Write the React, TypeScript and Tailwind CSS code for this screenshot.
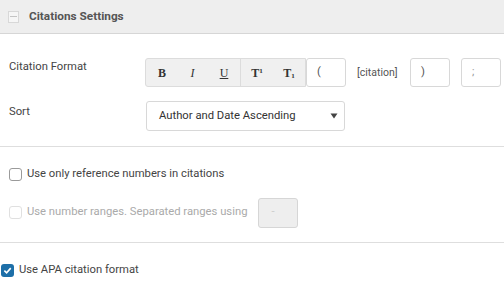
import React, { useState } from 'react';

const Checkbox = ({ checked, disabled }: { checked?: boolean; disabled?: boolean }) => (
  <span
    className={
      checked
        ? 'flex h-[13px] w-[13px] items-center justify-center rounded-[3px] bg-[#1d6fa8]'
        : disabled
        ? 'h-[13px] w-[13px] rounded-[3px] border border-[#e0e0e0] bg-white'
        : 'h-[13px] w-[13px] rounded-[3px] border border-[#9a9a9a] bg-white'
    }
  >
    {checked && (
      <svg width="9" height="9" viewBox="0 0 10 10">
        <path d="M1.5 5.2 L4 7.6 L8.6 2.4" fill="none" stroke="white" strokeWidth="1.8" />
      </svg>
    )}
  </span>
);

const App = () => {
  const [sort] = useState('Author and Date Ascending');

  return (
    <div className="h-[283px] w-[504px] overflow-hidden bg-white font-['Roboto',sans-serif] text-[11.25px] text-[#444]">
      {/* header */}
      <div className="flex h-[34px] items-center border-b border-[#d6d6d6] bg-[#eeeeee] pl-[8px]">
        <span className="flex h-[12px] w-[11px] items-center justify-center border border-[#d8d8d8] bg-[#f6f6f6]">
          <span className="h-px w-[7px] bg-[#c4c4c4]" />
        </span>
        <span className="ml-[10px] text-[11.8px] font-bold text-[#555]">Citations Settings</span>
      </div>

      {/* format + sort */}
      <div className="border-b border-[#dedede] pb-[15px] pt-[24px]">
        <div className="flex items-center">
          <span className="w-[145px] self-start pl-[9px] pt-[1px] text-[#444]">Citation Format</span>
          <div className="flex h-[29px] items-center rounded-l-[3px] border border-[#dcdcdc] bg-[#f0f0f0] font-['Liberation_Serif',serif] text-[12px] text-[#333]">
            <span className="w-[31px] pl-px text-center font-bold">B</span>
            <span className="w-[31px] text-center italic">I</span>
            <span className="w-[32px] text-center underline">U</span>
            <span className="h-full w-px bg-[#dcdcdc]" />
            <span className="w-[32px] text-center font-bold">
              T<sup className="text-[7px]">1</sup>
            </span>
            <span className="w-[32px] text-center font-bold">
              T<sub className="text-[7px]">1</sub>
            </span>
          </div>
          <div className="flex h-[29px] w-[40px] items-center rounded-[3px] border border-[#d8d8d8] bg-white pl-[10px] text-[#555]">(</div>
          <span className="ml-[11px] w-[53px] text-[10.5px] text-[#555]">[citation]</span>
          <div className="flex h-[29px] w-[40px] items-center rounded-[3px] border border-[#d8d8d8] bg-white pl-[10px] text-[#555]">)</div>
          <div className="ml-[11px] flex h-[29px] w-[40px] items-center rounded-[3px] border border-[#d8d8d8] bg-white pl-[10px] text-[#999]">;</div>
        </div>
        <div className="mt-[14px] flex items-center">
          <span className="w-[146px] self-start pl-[9px] pt-[3px] text-[#444]">Sort</span>
          <div className="flex h-[30px] w-[199px] items-center justify-between rounded-[3px] border border-[#d8d8d8] bg-white pl-[12px] pr-[6px] text-[#333]">
            <span>{sort}</span>
            <svg width="8" height="6" viewBox="0 0 8 6">
              <path d="M0.5 0.5 L7.5 0.5 L4 5.5 Z" fill="#444" />
            </svg>
          </div>
        </div>
      </div>

      {/* numbers */}
      <div className="border-b border-[#dedede] pb-[14px] pt-[19px]">
        <label className="flex items-center gap-[5px] pl-[9px] text-[#444]">
          <Checkbox />
          <span>Use only reference numbers in citations</span>
        </label>
        <div className="mt-[15px] flex items-center pl-[9px] text-[#aaa]">
          <Checkbox disabled />
          <span className="ml-[5px]">Use number ranges. Separated ranges using</span>
          <div className="ml-[11px] flex h-[30px] w-[40px] items-center rounded-[3px] border border-[#d6d6d6] bg-[#eeeeee] pl-[12px] text-[#ccc]">-</div>
        </div>
      </div>

      {/* apa */}
      <label className="flex items-center gap-[5px] pl-px pt-[19px] text-[#444]">
        <Checkbox checked />
        <span>Use APA citation format</span>
      </label>
    </div>
  );
};

export default App;
